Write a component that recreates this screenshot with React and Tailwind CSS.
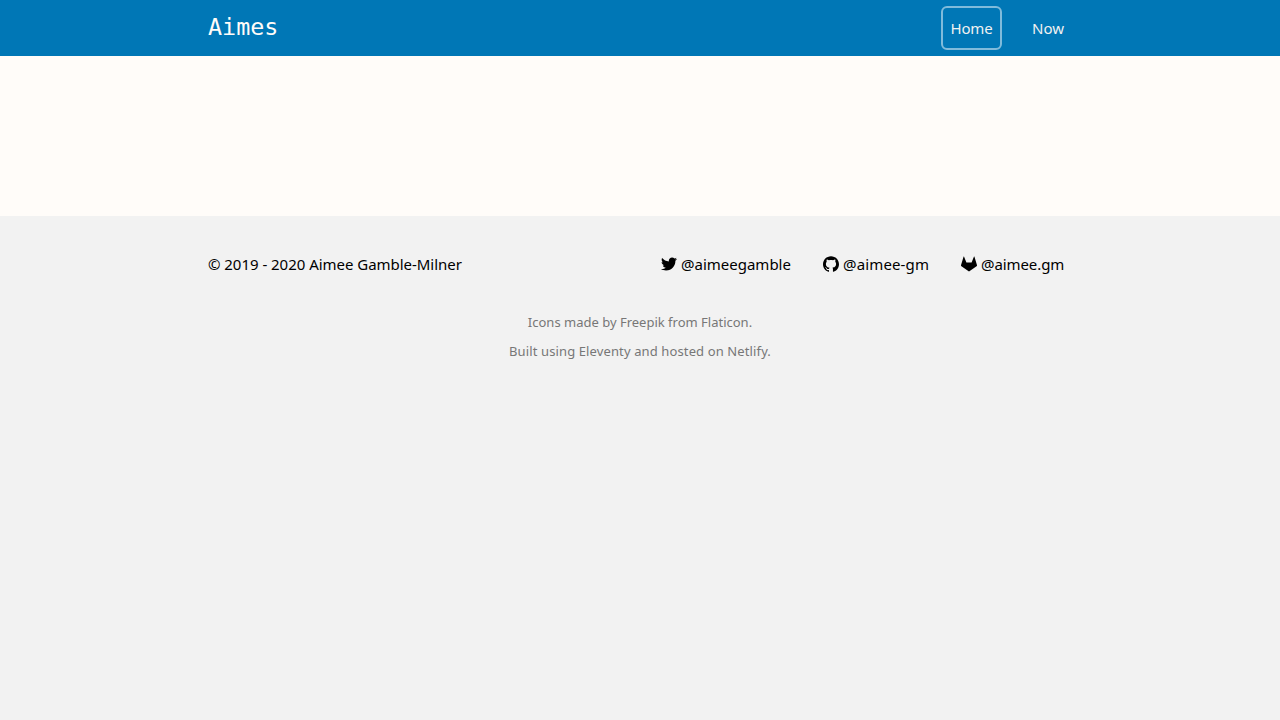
import React from "react";
import { SiGithub } from "react-icons/si";

function Social({ icon, label, width }) {
  return (
    <a className={`flex items-center gap-1 ${width}`}>
      {icon}
      <span className="whitespace-nowrap">{label}</span>
    </a>
  );
}

const twitter = (
  <svg viewBox="0 0 512 512" className="size-4 shrink-0">
    <path d="M512 97.248c-19.04 8.352-39.328 13.888-60.48 16.576 21.76-12.992 38.368-33.408 46.176-58.016-20.288 12.096-42.688 20.64-66.56 25.408C411.872 60.704 384.416 48 354.464 48c-58.112 0-104.896 47.168-104.896 104.992 0 8.32.704 16.32 2.432 23.936-87.264-4.256-164.48-46.08-216.352-109.792-9.056 15.712-14.368 33.696-14.368 53.056 0 36.352 18.72 68.576 46.624 87.232-16.864-.32-33.408-5.216-47.424-12.928v1.152c0 51.008 36.384 93.376 84.096 103.136-8.544 2.336-17.856 3.456-27.52 3.456-6.72 0-13.504-.384-19.872-1.792 13.6 41.568 52.192 72.128 98.08 73.12-35.712 27.936-81.056 44.768-130.144 44.768-8.608 0-16.864-.384-25.12-1.44C46.496 446.88 101.6 464 161.024 464c193.152 0 298.752-160 298.752-298.688 0-4.64-.16-9.12-.384-13.568C480.224 136.96 497.728 118.496 512 97.248z" />
  </svg>
);

const gitlab = (
  <svg viewBox="0 0 16 16" className="size-4 shrink-0">
    <path d="M3.1.7c-.1-.25-.45-.25-.54 0L.05 9a1.1 1.1 0 0 0 .4 1.2L8 15.4l7.55-5.2a1.1 1.1 0 0 0 .4-1.2L13.44.7c-.09-.25-.44-.25-.54 0L10.6 6.6H5.4z" />
  </svg>
);

export default function App() {
  return (
    <div className="flex min-h-screen flex-col bg-[#fffcf9] font-['Noto_Sans',sans-serif] text-[15px] text-black">
      <header className="h-14 bg-[#0077b6] text-[#f1f1f1]">
        <div className="mx-auto flex h-full w-[864px] items-center justify-between">
          <a className="font-['DejaVu_Sans_Mono',monospace] text-[23.4px] text-[#fffcf9]">Aimes</a>
          <nav className="flex gap-[22px]">
            <a className="flex h-11 w-[61px] items-center justify-center rounded-md border-2 border-white/50 tracking-[-0.2px]">Home</a>
            <a className="flex h-11 w-12 items-center pl-2">Now</a>
          </nav>
        </div>
      </header>
      <main className="h-40" />
      <footer className="flex-1 bg-[#f2f2f2] pt-8">
        <div className="mx-auto flex h-8 w-[864px] items-center justify-between pr-2">
          <p className="tracking-[-0.03px]">© 2019 - 2020 Aimee Gamble-Milner</p>
          <div className="flex gap-8">
            <Social icon={twitter} label="@aimeegamble" width="w-[130px] tracking-[0px]" />
            <Social icon={<SiGithub className="size-4 shrink-0" />} label="@aimee-gm" width="w-[106px] tracking-[0.15px]" />
            <Social icon={gitlab} label="@aimee.gm" width="w-[103px] tracking-[-0.08px]" />
          </div>
        </div>
        <div className="mt-7 text-center text-[13px] leading-[29px] text-[#777]">
          <p>Icons made by Freepik from Flaticon.</p>
          <p className="tracking-[0.12px]">Built using Eleventy and hosted on Netlify.</p>
        </div>
      </footer>
    </div>
  );
}
